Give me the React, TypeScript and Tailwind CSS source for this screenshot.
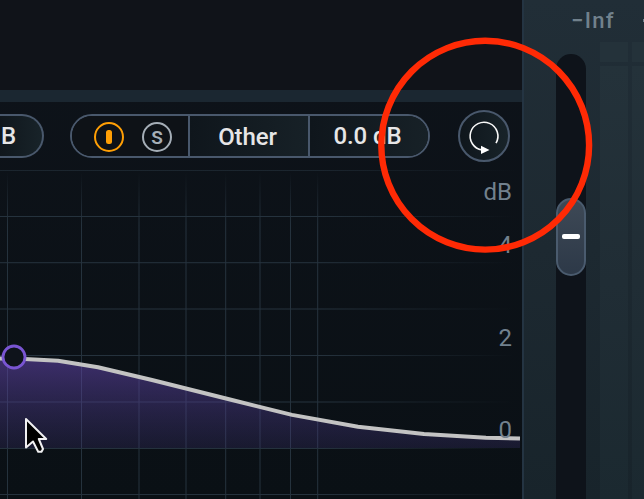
import type { ReactNode } from 'react';

const verticals = [7.5, 81.5, 139, 186, 225.7, 260, 290.5, 317.7];
const horizontals = [0.5, 46.5, 92.7, 139, 185.5, 232, 278.5, 324.5];

function Cell({ className, children }: { className: string; children: ReactNode }) {
  return (
    <div className={`flex h-full items-center justify-center whitespace-pre text-2xl font-medium tracking-[-0.1px] text-[#e6e6e7] ${className}`}>
      {children}
    </div>
  );
}

function Toolbar() {
  return (
    <div className="flex h-[68px] items-center">
      <div className="h-11 w-11 shrink-0 overflow-hidden rounded-r-full border-2 border-l-0 border-[#49586c] bg-gradient-to-r from-[#10171d] to-[#182329]">
        <Cell className="justify-start!">
          <span className="pl-[1px]">B</span>
        </Cell>
      </div>
      <div className="ml-[26px] flex h-11 w-[360px] shrink-0 overflow-hidden rounded-full border-2 border-[#49586c]">
        <div className="flex w-[118px] shrink-0 items-center border-r-2 border-[#49586c] bg-[#0e1217] pl-[22px] pt-[2px]">
          <div className="flex h-[30px] w-[30px] shrink-0 items-center justify-center rounded-full border-2 border-[#ff9f05]">
            <div className="h-[14px] w-[6px] rounded-[2.5px] bg-[#ff9f05]" />
          </div>
          <div className="ml-[18px] flex h-[30px] w-[30px] shrink-0 items-center justify-center rounded-full border-2 border-[#a5aeb7] text-[19px] leading-none font-semibold text-[#a5aeb7]">
            S
          </div>
        </div>
        <Cell className="w-[120px] shrink-0 border-r-2 border-[#49586c] bg-gradient-to-r from-[#0f161c] to-[#172127]">
          <span className="pt-px pr-[3px]">Other</span>
        </Cell>
        <Cell className="grow bg-gradient-to-r from-[#0f161c] to-[#172127]">
          <span className="pr-[3px]">0.0 dB</span>
        </Cell>
      </div>
      <div className="ml-7 h-[52px] w-[52px] shrink-0 rounded-full border-2 border-[#49586c] bg-gradient-to-r from-[#0f161c] to-[#182329]">
        <svg className="h-12 w-12" viewBox="0 0 48 48" fill="none">
          <path d="M36 31.2 A13.9 13.9 0 1 0 22 37.9" stroke="#f8f8f8" strokeWidth="1.6" />
          <path d="M21 33.7 L29.5 38 L21 42Z" fill="#fff" />
        </svg>
      </div>
    </div>
  );
}

function Graph() {
  return (
    <div className="relative h-[329px]">
      <svg className="block h-[329px] w-[522px]" viewBox="0 0 522 329" fill="none">
        <defs>
          <linearGradient id="fadeX" gradientUnits="userSpaceOnUse" x1="0" y1="0" x2="515" y2="0">
            <stop offset="0.62" stopColor="#25323d" />
            <stop offset="1" stopColor="#25323d" stopOpacity="0" />
          </linearGradient>
          <linearGradient id="fadeY" gradientUnits="userSpaceOnUse" x1="0" y1="2" x2="0" y2="90">
            <stop stopColor="#25323d" stopOpacity="0" />
            <stop offset="0.6" stopColor="#25323d" />
          </linearGradient>
          <linearGradient id="band" gradientUnits="userSpaceOnUse" x1="0" y1="188" x2="0" y2="278">
            <stop stopColor="#6848b5" stopOpacity="0.54" />
            <stop offset="1" stopColor="#483a86" stopOpacity="0.23" />
          </linearGradient>
        </defs>
        {verticals.map((x) => (
          <path key={x} d={`M${x} 3V329`} stroke="url(#fadeY)" />
        ))}
        {horizontals.map((y, i) => (
          <rect key={y} x="0" y={y - 0.5} width="515" height="1" fill="url(#fadeX)" opacity={i === 0 ? 0.6 : 1} />
        ))}
        <path d="M0 188L58 190.5L98 197.2L152 210L232 230L292 244.9L358 257L424 264L486 267.7L520 268.5V278H0Z" fill="url(#band)" />
        <path d="M0 188.5L20 188.7L58 190.7L98 197.2L152 210L232 230L292 244.9L358 256.8L424 264L486 267.8L520 268.6" stroke="#c3c3c3" strokeWidth="4" strokeLinejoin="round" />
        <circle cx="14" cy="187" r="11" fill="#0e131b" stroke="#7955d2" strokeWidth="2.8" />
      </svg>
      <div className="absolute inset-y-0 right-[10px] w-10 text-right text-2xl leading-7 text-[#72818e]">
        <div className="absolute right-0 top-[8px]">dB</div>
        <div className="absolute right-0 top-[61px]">4</div>
        <div className="absolute right-0 top-[154px]">2</div>
        <div className="absolute right-0 top-[246px]">0</div>
      </div>
    </div>
  );
}

function Meter({ className }: { className: string }) {
  return (
    <div className={`flex shrink-0 flex-col gap-1 ${className}`}>
      <div className="h-5 bg-[#24323a]" />
      <div className="grow bg-gradient-to-b from-[#24323a] via-[#202d35] to-[#1b2930]" />
    </div>
  );
}

function OutputPanel() {
  return (
    <div className="h-full w-[122px] shrink-0 overflow-hidden border-l-2 border-[#243442] bg-gradient-to-b from-[#212e37] via-[#1d2931] to-[#18242b]">
      <div className="flex h-[42px] justify-between pl-[47px] pt-2 text-[22px] leading-[26px] font-medium tracking-[1.3px] whitespace-nowrap text-[#71818c]">
        <span>−Inf</span>
        <div className="mt-[11px] h-[3px] w-px bg-[#71818c]" />
      </div>
      <div className="flex h-[457px]">
        <div className="mt-3 ml-8 flex w-[30px] shrink-0 flex-col rounded-t-[15px] bg-[#0e131a] pt-36">
          <div className="flex h-[78px] items-center justify-center rounded-full border-2 border-[#4a5b6e] bg-gradient-to-b from-[#3e4956] to-[#2d3948] pb-px">
            <div className="h-[5px] w-[18px] rounded-[2px] bg-white" />
          </div>
        </div>
        <Meter className="ml-[14px] w-7" />
        <Meter className="ml-1 w-7" />
      </div>
    </div>
  );
}

export default function App() {
  return (
    <div className="relative flex h-[499px] w-[644px] overflow-hidden bg-[#0c1117] font-['Roboto','Liberation_Sans',sans-serif]">
      <div className="flex w-[522px] shrink-0 flex-col bg-gradient-to-b from-[#0e131a] to-[#0a1015]">
        <div className="h-[90px] bg-[#101319]" />
        <div className="h-3 bg-[#1b2731]" />
        <Toolbar />
        <Graph />
      </div>
      <OutputPanel />
      <svg className="pointer-events-none absolute inset-0 h-[499px] w-[644px]" viewBox="0 0 644 499" fill="none">
        <ellipse cx="485.2" cy="145.2" rx="103.9" ry="104.4" stroke="#ff2a05" strokeWidth="6.4" />
        <path d="M26 419V447.5L33 441.5L38.2 451.8H41.5L43 449L38.8 439H46.2Z" fill="#000" stroke="#f0f0f2" strokeWidth="2" strokeLinejoin="round" />
      </svg>
    </div>
  );
}
